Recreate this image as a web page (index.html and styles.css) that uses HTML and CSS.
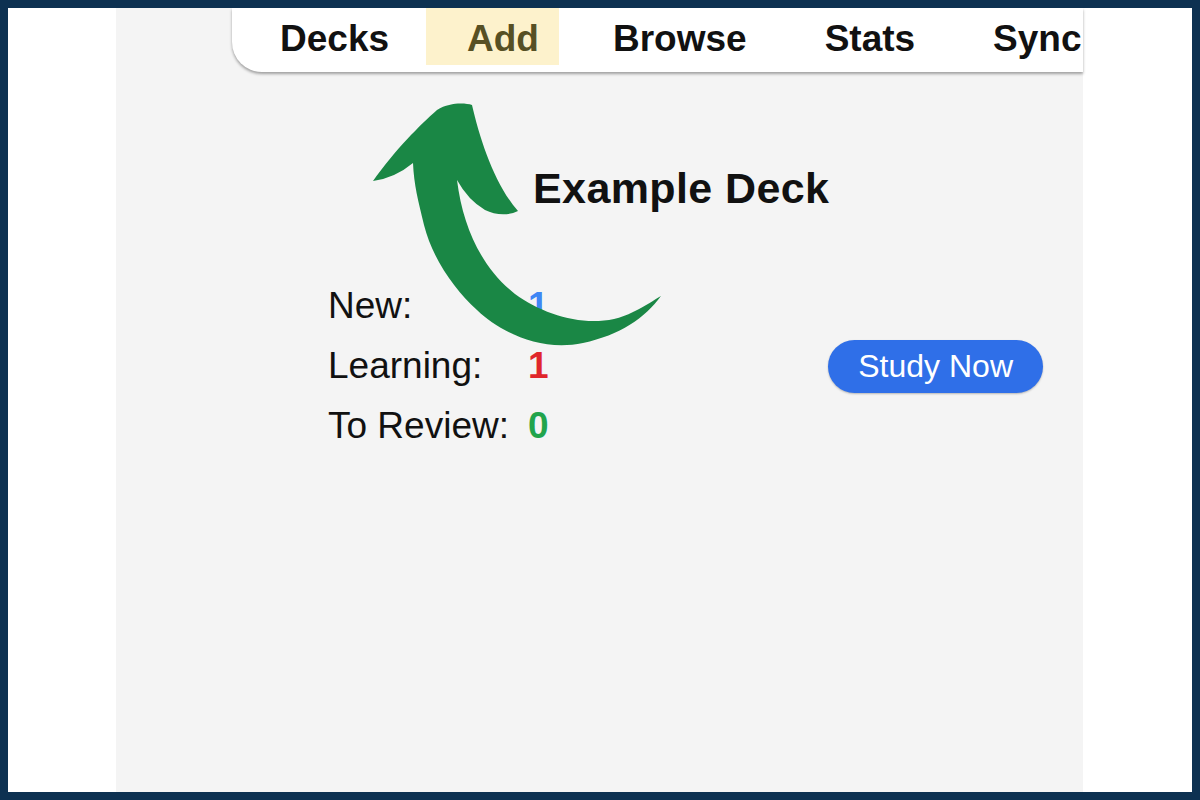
FILE: index.html
```html
<!DOCTYPE html>
<html lang="en">
<head>
<meta charset="utf-8">
<title>Anki – Example Deck</title>
<link rel="stylesheet" href="styles.css">
</head>
<body>
<div class="frame">
  <div class="panel">
    <nav class="toolbar">
      <span class="nav-item">Decks</span>
      <span class="nav-item active">Add</span>
      <span class="nav-item">Browse</span>
      <span class="nav-item">Stats</span>
      <span class="nav-item">Sync</span>
    </nav>
    <main class="deck">
      <h1 class="deck-title">Example Deck</h1>
      <div class="deck-body">
        <div class="counts">
          <span class="label">New:</span><span class="num new">1</span>
          <span class="label">Learning:</span><span class="num learn">1</span>
          <span class="label">To Review:</span><span class="num review">0</span>
        </div>
        <button class="study">Study Now</button>
      </div>
    </main>
  </div>
  <svg class="arrow" viewBox="0 0 1200 800" xmlns="http://www.w3.org/2000/svg" aria-hidden="true">
    <path d="M437 110 C450 102 465 103 472 105 C480 140 495 185 518 211 C508 216 495 215 485 210 Q468 200 457 180 C463 228 482 268 515 294 C548 318 597 331 633 312 C646 306 654 300 661 296 C645 318 620 335 583 343 C540 352 500 332 477 310 C455 290 433 260 424 225 C418 200 414 185 413 163 Q395 178 373 181 C395 150 420 125 437 110 Z" fill="#1a8745"/>
  </svg>
</div>
</body>
</html>
```

FILE: styles.css
```css
* { box-sizing: border-box; }

html, body {
  margin: 0;
  padding: 0;
  background: #0d3151;
}

body {
  font-family: "Liberation Sans", Arial, sans-serif;
  color: #111;
}

.frame {
  position: relative;
  width: 1200px;
  height: 800px;
  border: 8px solid #0d3151;
  background: #fff;
  display: flex;
  overflow: hidden;
}

.panel {
  margin-left: 108px;
  width: 967px;
  height: 100%;
  background: #f4f4f4;
  display: flex;
  flex-direction: column;
}

.toolbar {
  margin-left: 116px;
  height: 64px;
  background: #fff;
  border-bottom-left-radius: 30px;
  box-shadow: 0 2px 3px rgba(0, 0, 0, 0.35);
  display: flex;
  align-items: flex-start;
  padding-left: 9px;
  overflow: hidden;
  white-space: nowrap;
}

.nav-item {
  padding: 2px 39px 0;
  height: 57px;
  line-height: 58px;
  font-size: 37px;
  font-weight: bold;
  color: #111;
}

.nav-item.active {
  background: #fdf2cc;
  color: #575024;
  padding: 2px 20px 0 41px;
  margin: 0 15px 0 -2px;
}

.nav-item:last-child {
  padding-right: 0;
}

.deck-title {
  margin: 91px 0 0 417px;
  font-size: 43px;
  line-height: 50px;
  font-weight: bold;
  letter-spacing: 0.4px;
  color: #111;
}

.deck-body {
  margin-top: 63px;
  padding: 0 40px 0 212px;
  display: flex;
  align-items: center;
}

.counts {
  display: grid;
  grid-template-columns: auto auto;
  column-gap: 19px;
  font-size: 37px;
  line-height: 60px;
}

.num { font-weight: bold; }
.num.new { color: #3f86f4; }
.num.learn { color: #e0262b; }
.num.review { color: #21a44c; }

.study {
  margin-left: auto;
  height: 53px;
  padding: 0 30px;
  border: none;
  border-radius: 27px;
  background: #2f6fe8;
  color: #fff;
  font-family: "Liberation Sans", Arial, sans-serif;
  font-size: 32px;
  box-shadow: 0 1px 2px rgba(0, 0, 0, 0.25);
}

.arrow {
  position: absolute;
  left: -8px;
  top: -8px;
  width: 1200px;
  height: 800px;
  pointer-events: none;
}
```
